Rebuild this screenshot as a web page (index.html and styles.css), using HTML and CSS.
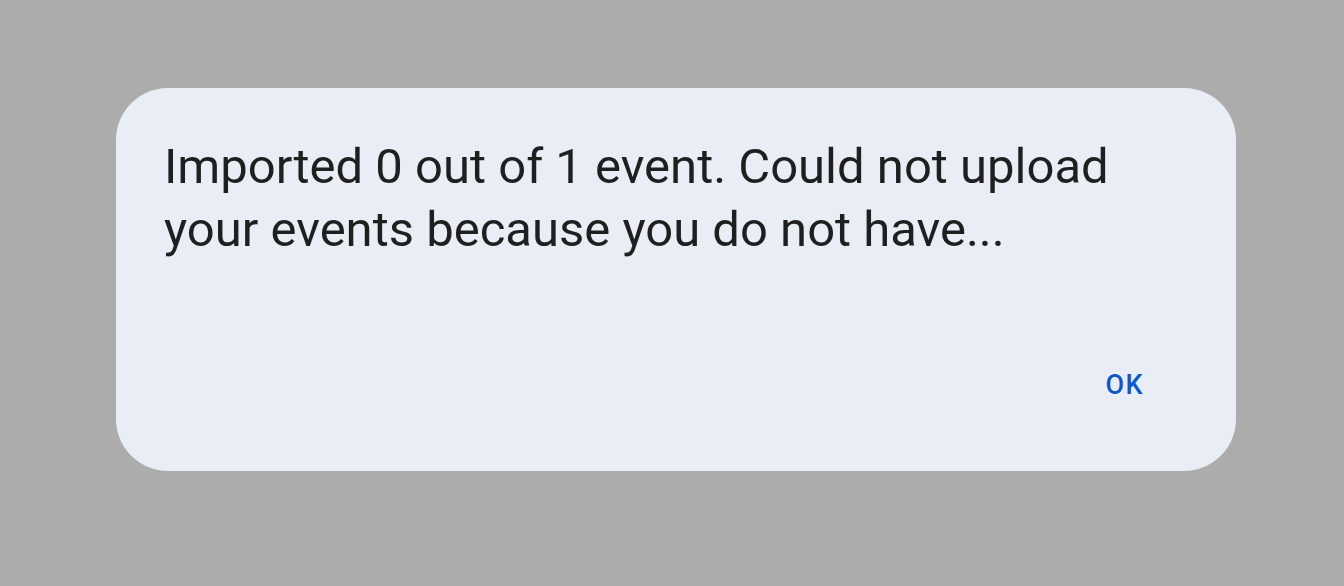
FILE: index.html
```html
<!DOCTYPE html>
<html>
<head>
<meta charset="utf-8">
<link rel="stylesheet" href="styles.css">
</head>
<body>
<div class="scrim">
  <div class="dialog">
    <p class="message">Imported 0 out of 1 event. Could not upload your events because you do not have...</p>
    <div class="actions">
      <button class="btn">OK</button>
    </div>
  </div>
</div>
</body>
</html>
```

FILE: styles.css
```css
html, body {
  margin: 0;
  padding: 0;
  background: #acacac;
  width: 1344px;
  height: 586px;
  overflow: hidden;
}
.scrim {
  padding: 88px 0 0 116px;
}
.dialog {
  box-sizing: border-box;
  width: 1120px;
  height: 383px;
  background: #e9eef6;
  border-radius: 52px;
  padding: 47px 48px 0 48px;
  display: flex;
  flex-direction: column;
}
.message {
  margin: 0;
  font-family: Roboto, "Noto Sans", sans-serif;
  font-size: 49px;
  line-height: 63px;
  color: #1f1f1f;
  width: 1000px;
}
.actions {
  margin-top: 108px;
  display: flex;
  justify-content: flex-end;
  padding-right: 44px;
}
.btn {
  border: 0;
  background: none;
  padding: 0;
  font-family: Roboto, "Noto Sans", sans-serif;
  font-weight: 500;
  font-size: 27px;
  letter-spacing: 1.4px;
  line-height: 32px;
  color: #0b57d0;
}
```
